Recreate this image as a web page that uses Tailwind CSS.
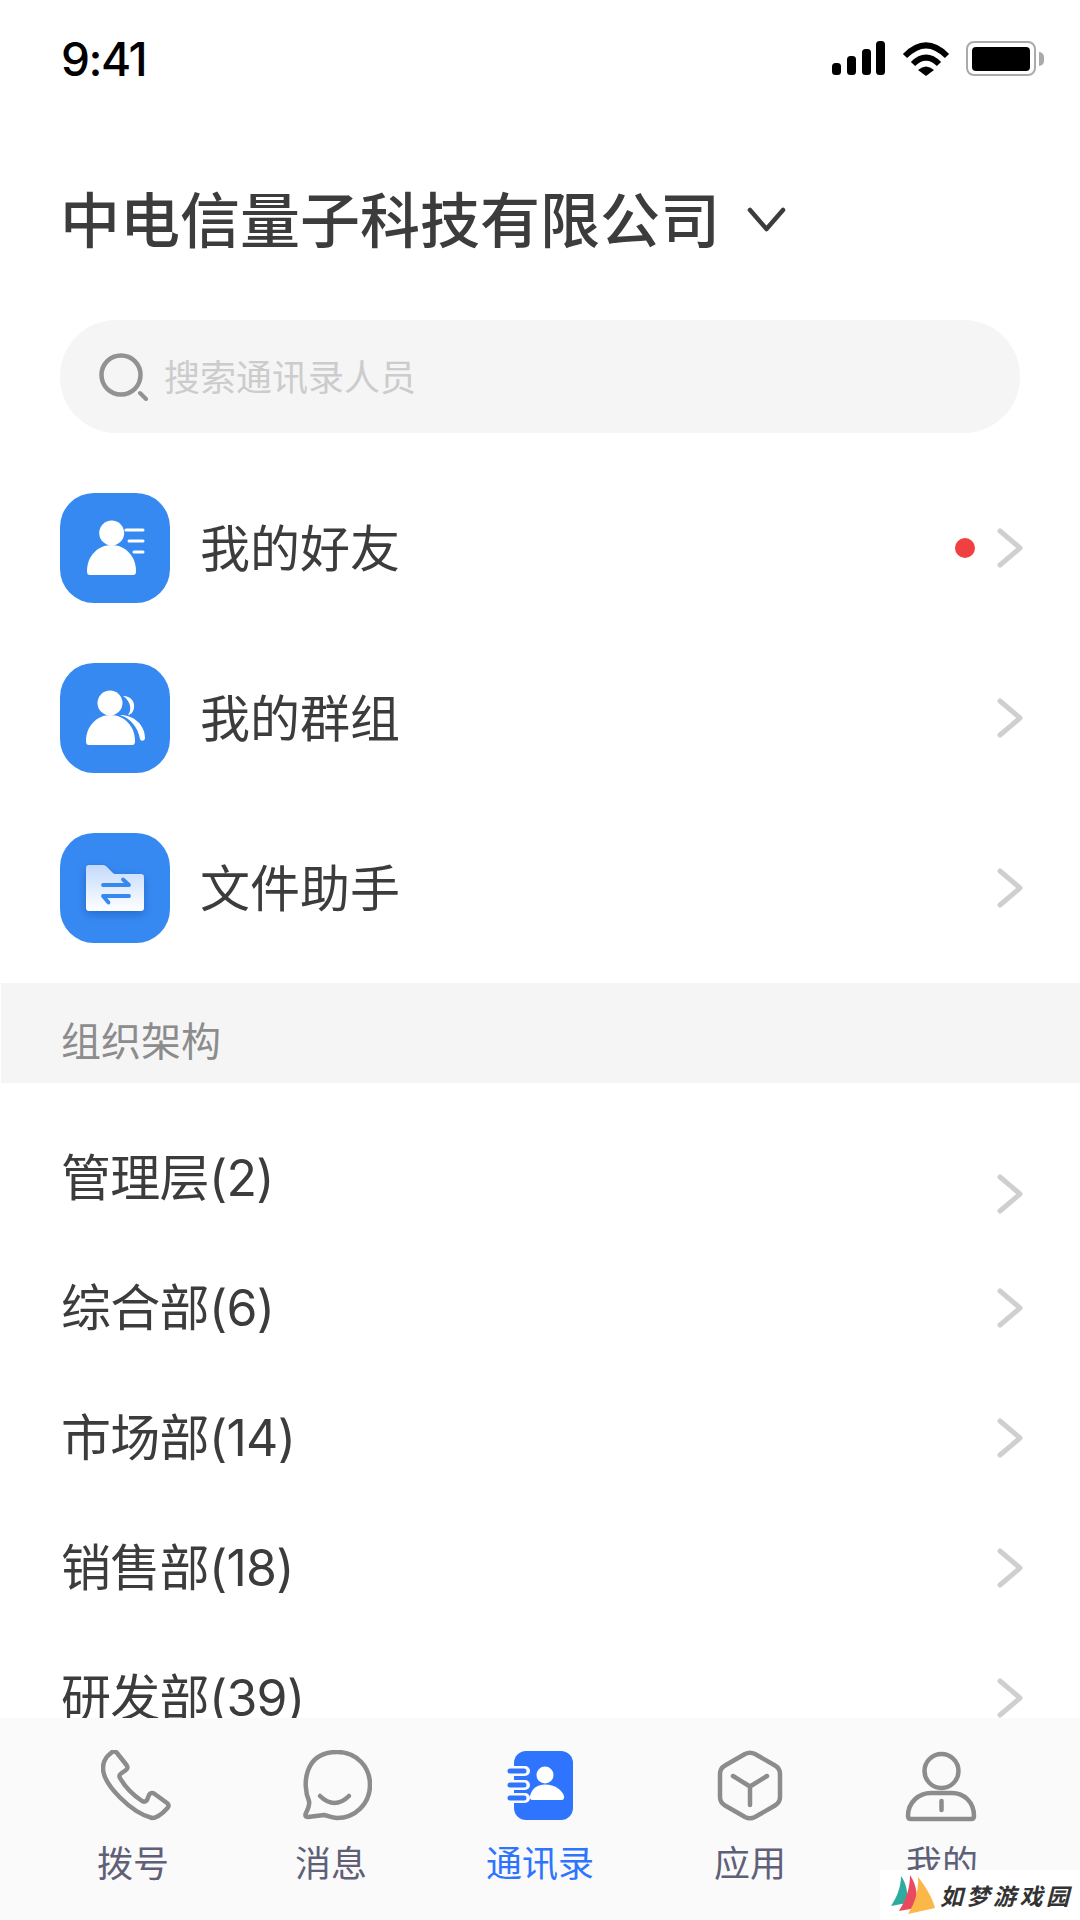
<!DOCTYPE html>
<html lang="zh-CN">
<head>
    <meta charset="UTF-8">
    <meta name="viewport" content="width=device-width, initial-scale=1.0">
    <title>通讯录</title>
    <script src="https://cdn.jsdelivr.net/npm/@tailwindcss/browser@4"></script>
</head>
<body class="bg-white">
<div class="relative w-[1080px] h-[1920px] overflow-hidden flex flex-col bg-white text-[#3c3c3c] font-['Noto_Sans_CJK_SC','Noto_Sans',sans-serif]">

    <!-- Status bar -->
    <div class="h-[117px] shrink-0 flex items-center justify-between pl-[61px] pr-[36px]">
        <span class="text-[46px] leading-none tracking-[-1.5px] font-medium text-black font-['Inter',sans-serif]">9:41</span>
        <div class="flex items-center">
            <svg class="w-[53px] h-[35px] mr-[17px]" viewBox="0 0 53 35" fill="#000">
                <rect x="0" y="22" width="9" height="12" rx="3.5"/>
                <rect x="15" y="15" width="9" height="19" rx="3.5"/>
                <rect x="30" y="8" width="9" height="26" rx="3.5"/>
                <rect x="44" y="0" width="9" height="34" rx="3.5"/>
            </svg>
            <svg class="w-[48px] h-[35px] mr-[16px]" viewBox="0 0 48 35">
                <path d="M3 15 Q24 -6 45 15" fill="none" stroke="#000" stroke-width="6"/>
                <path d="M11 23 Q24 10 37 23" fill="none" stroke="#000" stroke-width="6"/>
                <path d="M16 29 Q24 22 32 29 L24 35 Z" fill="#000"/>
            </svg>
            <div class="w-[70px] h-[35px] rounded-[8px] border-2 border-[#aaaaaa] flex items-center justify-center">
                <div class="w-[58px] h-[24px] rounded-[4px] bg-black"></div>
            </div>
            <div class="w-[5px] h-[14px] ml-[3px] rounded-r-full bg-[#aaaaaa]"></div>
        </div>
    </div>

    <!-- Company title -->
    <div class="h-[203px] shrink-0 flex items-center pl-[60px]">
        <span class="text-[60px] leading-none font-medium mb-[3px]">中电信量子科技有限公司</span>
        <svg class="w-[39px] h-[27px] ml-[27px] mt-[2px]" viewBox="0 0 39 27" fill="none" stroke="#3c3c3c" stroke-width="4.5" stroke-linecap="round" stroke-linejoin="round">
            <path d="M3 4 L19.5 23 L36 4"/>
        </svg>
    </div>

    <!-- Search -->
    <div class="w-[960px] h-[113px] ml-[60px] shrink-0 rounded-[56px] bg-[#f5f5f5] flex items-center pl-[39px]">
        <svg class="w-[50px] h-[48px]" viewBox="0 0 50 48" fill="none" stroke-linecap="round">
            <circle cx="22" cy="22" r="19.5" stroke="#929292" stroke-width="4.5"/>
            <path d="M41 40 L47 46" stroke="#929292" stroke-width="4"/>
        </svg>
        <span class="ml-[15px] text-[36px] leading-none text-[#cccccc] mb-[3px]">搜索通讯录人员</span>
    </div>

    <!-- Shortcuts -->
    <div class="mt-[60px] shrink-0 flex flex-col gap-[60px] pl-[60px] pr-[57px]">
        <div class="h-[110px] flex items-center">
            <svg class="w-[110px] h-[110px] rounded-[34px] bg-[#3789f2]" viewBox="0 0 110 110" fill="#fff">
                <circle cx="51.7" cy="40" r="12.5"/>
                <path d="M27 78 C27 63 38 52 51.5 52 C65 52 76 63 76 78 C76 81 75 82 73 82 H30 C28 82 27 81 27 78Z"/>
                <path d="M66 37 H83 M69 48 H83 M74 59 H83" stroke="#fff" stroke-width="3" stroke-linecap="round"/>
            </svg>
            <span class="ml-[30px] text-[50px] leading-none mb-[7px]">我的好友</span>
            <span class="ml-auto w-[20px] h-[20px] rounded-full bg-[#f04040]"></span>
            <svg class="ml-[22px] w-[26px] h-[40px]" viewBox="0 0 26 40" fill="none" stroke="#cfcfcf" stroke-width="5" stroke-linecap="round" stroke-linejoin="round">
                <path d="M3 3 L23 20 L3 37"/>
            </svg>
        </div>
        <div class="h-[110px] flex items-center">
            <svg class="w-[110px] h-[110px] rounded-[34px] bg-[#3789f2]" viewBox="0 0 110 110" fill="#fff">
                <circle cx="50" cy="40" r="12.5"/>
                <path d="M26 78 C26 63 37 52 50.500 52 C64 52 75 63 75 78 C75 81 74 82 72 82 H29 C27 82 26 81 26 78Z"/>
                <path d="M63 33 C72 33 75 40 74 45 C73 50 70 52 68 52 C72 47 71 38 63 33Z"/>
                <path d="M60 52 C74 52 85 62 85 75 C85 78 81 79 80 76 C78 64 70 55 60 52Z"/>
            </svg>
            <span class="ml-[30px] text-[50px] leading-none mb-[7px]">我的群组</span>
            <svg class="ml-auto w-[26px] h-[40px]" viewBox="0 0 26 40" fill="none" stroke="#cfcfcf" stroke-width="5" stroke-linecap="round" stroke-linejoin="round">
                <path d="M3 3 L23 20 L3 37"/>
            </svg>
        </div>
        <div class="h-[110px] flex items-center">
            <svg class="w-[110px] h-[110px] rounded-[34px] bg-[#3789f2]" viewBox="0 0 110 110">
                <defs>
                    <linearGradient id="folderFill" x1="0" y1="0" x2="0" y2="1">
                        <stop offset="0" stop-color="#c3dafb"/>
                        <stop offset="1" stop-color="#ffffff"/>
                    </linearGradient>
                </defs>
                <path class="drop-shadow-[0_3px_5px_rgba(0,50,140,0.35)]" fill="url(#folderFill)" d="M26 35 C26 33 27 32 29 32 H43 C45 32 46 33 47 34 L53 40 C54 41 55 41 57 41 H81 C83 41 84 42 84 44 V75 C84 77 83 78 81 78 H29 C27 78 26 77 26 75Z"/>
                <path d="M43 52 H69 L63 46.500 M69 63 H43 L48.500 69.500" fill="none" stroke="#3789f2" stroke-width="3.800" stroke-linecap="round" stroke-linejoin="round"/>
            </svg>
            <span class="ml-[30px] text-[50px] leading-none mb-[7px]">文件助手</span>
            <svg class="ml-auto w-[26px] h-[40px]" viewBox="0 0 26 40" fill="none" stroke="#cfcfcf" stroke-width="5" stroke-linecap="round" stroke-linejoin="round">
                <path d="M3 3 L23 20 L3 37"/>
            </svg>
        </div>
    </div>

    <!-- Section header -->
    <div class="mt-[40px] ml-[1px] h-[100px] shrink-0 flex items-center pl-[60px] bg-[#f5f5f5]">
        <span class="text-[40px] leading-none text-[#8c8c8c] mt-[12px]">组织架构</span>
    </div>

    <!-- Departments -->
    <div class="flex-1 min-h-0 overflow-hidden pt-[30px] pl-[61px] pr-[57px] font-['Inter','Noto_Sans_CJK_SC',sans-serif]">
        <div class="h-[130px] flex items-center justify-between">
            <span class="text-[50px] leading-none tracking-[-0.7px] mb-[1px]">管理层(2)</span>
            <svg class="w-[26px] h-[40px] translate-y-[16px]" viewBox="0 0 26 40" fill="none" stroke="#cfcfcf" stroke-width="5" stroke-linecap="round" stroke-linejoin="round"><path d="M3 3 L23 20 L3 37"/></svg>
        </div>
        <div class="h-[130px] flex items-center justify-between">
            <span class="text-[50px] leading-none tracking-[-0.7px] mb-[1px]">综合部(6)</span>
            <svg class="w-[26px] h-[40px]" viewBox="0 0 26 40" fill="none" stroke="#cfcfcf" stroke-width="5" stroke-linecap="round" stroke-linejoin="round"><path d="M3 3 L23 20 L3 37"/></svg>
        </div>
        <div class="h-[130px] flex items-center justify-between">
            <span class="text-[50px] leading-none tracking-[-0.7px] mb-[1px]">市场部(14)</span>
            <svg class="w-[26px] h-[40px]" viewBox="0 0 26 40" fill="none" stroke="#cfcfcf" stroke-width="5" stroke-linecap="round" stroke-linejoin="round"><path d="M3 3 L23 20 L3 37"/></svg>
        </div>
        <div class="h-[130px] flex items-center justify-between">
            <span class="text-[50px] leading-none tracking-[-0.7px] mb-[1px]">销售部(18)</span>
            <svg class="w-[26px] h-[40px]" viewBox="0 0 26 40" fill="none" stroke="#cfcfcf" stroke-width="5" stroke-linecap="round" stroke-linejoin="round"><path d="M3 3 L23 20 L3 37"/></svg>
        </div>
        <div class="h-[130px] flex items-center justify-between">
            <span class="text-[50px] leading-none tracking-[-0.7px] mb-[1px]">研发部(39)</span>
            <svg class="w-[26px] h-[40px]" viewBox="0 0 26 40" fill="none" stroke="#cfcfcf" stroke-width="5" stroke-linecap="round" stroke-linejoin="round"><path d="M3 3 L23 20 L3 37"/></svg>
        </div>
    </div>

    <!-- Tab bar -->
    <div class="h-[202px] shrink-0 bg-[#fafafa] flex pl-[97px] pt-[32px] text-[36px] leading-none text-[#5f6078]">
        <div class="w-[72px] flex flex-col items-center">
            <svg class="w-[70px] h-[72px] shrink-0 ml-[6px]" viewBox="0 0 70 72" fill="none" stroke="#8c8c8c" stroke-width="4.5" stroke-linejoin="round">
                <path d="M10 3 C12 1 14.500 1 16 3 L25.500 15 C27 17 26.500 19 25 20 L20 23.500 C18.500 24.500 18 26 19 28 C24 37 32 45 41 51 C43 52 45 51.500 46 50 L48 45 C49 43 51 42.500 53 43.500 L66 53 C68 54.500 68 56 66.500 58 C62 63 57 68 51 68 C31 63 2 35 2 18 C2 11 6 6 10 3Z"/>
            </svg>
            <span class="mt-[21px]">拨号</span>
        </div>
        <div class="w-[72px] ml-[126px] flex flex-col items-center">
            <svg class="w-[70px] h-[72px] shrink-0 ml-[12px]" viewBox="0 0 70 72" fill="none" stroke="#8c8c8c" stroke-width="4.5" stroke-linecap="round" stroke-linejoin="round">
                <path d="M7 51 C0 35 2 2 35 2 C55 2 68 17 68 35 C68 54 53 68 35 68 C30 68 27 66 22 65 L6 67 C3 67 3 65 4 63 C6 59 8 55 7 51Z"/>
                <path d="M18 46 Q32.500 60 47 46"/>
            </svg>
            <span class="mt-[21px]">消息</span>
        </div>
        <div class="w-[108px] ml-[119px] flex flex-col items-center text-[#2f74ff]">
            <svg class="w-[68px] h-[72px] shrink-0 ml-[2px]" viewBox="0 0 68 72">
                <rect x="7" y="1" width="59" height="69" rx="12" fill="#2f74ff"/>
                <path d="M2 21 H18 M2 35 H18 M2 48 H18" stroke="#fafafa" stroke-width="10" stroke-linecap="round"/>
                <path d="M3 21 H17 M3 35 H17 M3 48 H17" stroke="#2f74ff" stroke-width="5" stroke-linecap="round"/>
                <circle cx="38" cy="25" r="8.500" fill="#fff"/>
                <path d="M23 46 C25 38 31 34.500 38 34.500 C48 34.500 55 40 57 46 C57.500 48 57 50 54 50 H26 C23 50 22.500 48 23 46Z" fill="#fff"/>
            </svg>
            <span class="mt-[21px]">通讯录</span>
        </div>
        <div class="w-[72px] ml-[120px] flex flex-col items-center">
            <svg class="w-[66px] h-[72px] shrink-0" viewBox="0 0 66 72" fill="none" stroke="#8c8c8c" stroke-width="4.500" stroke-linecap="round" stroke-linejoin="round">
                <path d="M28 4 Q33 1.500 38 4 L58 15.500 Q63 18.500 63 24 V47 Q63 52.500 58 55.500 L38 67 Q33 69.500 28 67 L8 55.500 Q3 52.500 3 47 V24 Q3 18.500 8 15.500Z"/>
                <path d="M16 26 L33 36.500 L50 26 M33 36.500 V55"/>
            </svg>
            <span class="mt-[21px]">应用</span>
        </div>
        <div class="w-[72px] ml-[120px] flex flex-col items-center">
            <svg class="w-[74px] h-[72px] shrink-0" viewBox="0 0 74 72" fill="none" stroke="#8c8c8c" stroke-width="4.500" stroke-linecap="round" stroke-linejoin="round">
                <circle cx="36.500" cy="21" r="17"/>
                <path d="M3 66 C3 52 14 43 26 43 H47 C59 43 69 52 69 66 Q69 69 66 69 H6 Q3 69 3 66Z"/>
                <path d="M36.500 51 V60"/>
            </svg>
            <span class="mt-[21px]">我的</span>
        </div>
    </div>

    <!-- Site watermark -->
    <div class="absolute right-0 bottom-0 w-[200px] h-[50px] bg-white flex items-center pl-[10px]">
        <svg class="w-[46px] h-[40px] shrink-0" viewBox="0 0 46 40">
            <path d="M11 1 C17 9 18 20 17 28 L1 31 C7 22 11 12 11 1Z" fill="#2fab9d"/>
            <path d="M20 0 C27 10 28 23 26 33 L9 36 C16 25 20 13 20 0Z" fill="#e94a60"/>
            <path d="M28 2 C36 12 43 24 45 33 L18 39 C25 28 29 15 28 2Z" fill="#fbb848"/>
        </svg>
        <span class="ml-[4px] text-[23px] leading-none font-bold italic tracking-[3.500px] text-[#333333] whitespace-nowrap">如梦游戏园</span>
    </div>
</div>
</body>
</html>
